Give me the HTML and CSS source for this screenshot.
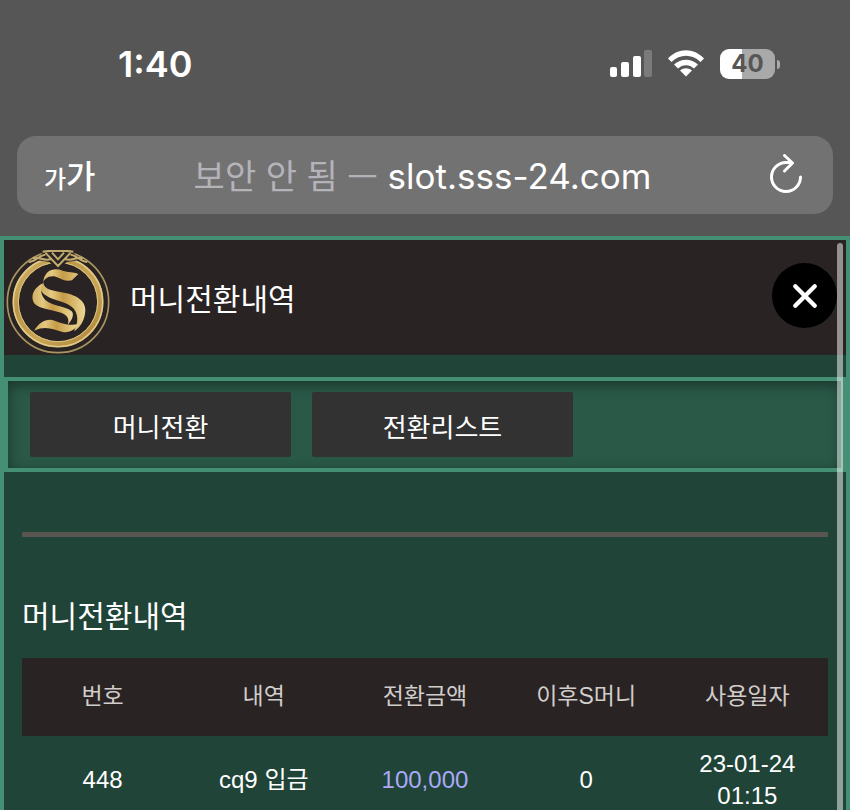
FILE: index.html
```html
<!DOCTYPE html>
<html lang="ko">
<head>
<meta charset="utf-8">
<meta name="viewport" content="width=device-width, initial-scale=1">
<title>머니전환내역</title>
<link rel="stylesheet" href="styles.css">
</head>
<body>
<div class="browser">
  <div class="status">
    <time class="clock">1:40</time>
    <div class="indicators">
      <svg class="signal" viewBox="0 0 42 28" aria-hidden="true">
        <rect x="0" y="17" width="7" height="10" rx="2"/>
        <rect x="11" y="12" width="8" height="15" rx="2"/>
        <rect x="23" y="6" width="8" height="21" rx="2"/>
        <rect class="faint" x="34" y="0" width="8" height="27" rx="2"/>
      </svg>
      <svg class="wifi" viewBox="0 0 36 28" aria-hidden="true">
        <path d="M0 8.500C10-2.500 26-2.500 36 8.500L32.500 12C24 3.500 12 3.500 3.500 12Z"/>
        <path d="M6 14.500C13 8 23 8 30 14.500L26 18.500C21.500 14 14.500 14 10 18.500Z"/>
        <path d="M12 20.500C15.500 17.500 20.500 17.500 24 20.500L18 26.500Z"/>
      </svg>
      <div class="battery"><span class="level">40</span><span class="nub"></span></div>
    </div>
  </div>
  <div class="address">
    <button class="textsize" type="button"><small>가</small>가</button>
    <button class="url" type="button"><span class="insecure">보안 안 됨 —</span> slot.sss-24.com</button>
    <button class="reload" type="button" aria-label="새로고침">
      <svg viewBox="0 0 34 40" aria-hidden="true"><path d="M23 8.500H17A14.500 14.500 0 1 0 31.500 23M15.500 1.500L23.500 9L15.500 17"/></svg>
    </button>
  </div>
</div>
<main class="app">
  <header class="top">
    <svg class="logo" viewBox="0 0 312 312" aria-hidden="true">
      <defs>
        <linearGradient id="ring" x1="0" y1="0" x2="1" y2="1">
          <stop offset="0" stop-color="#d6b970"/><stop offset=".3" stop-color="#bb9548"/>
          <stop offset=".6" stop-color="#c9a556"/><stop offset="1" stop-color="#ad8338"/>
        </linearGradient>
        <linearGradient id="gold" x1="0" y1="0" x2="1" y2="0">
          <stop offset="0" stop-color="#cfae61"/><stop offset=".25" stop-color="#e3c982"/>
          <stop offset=".5" stop-color="#c59b48"/><stop offset=".75" stop-color="#d9ba6c"/>
          <stop offset="1" stop-color="#ecd797"/>
        </linearGradient>
      </defs>
      <g fill="none">
        <circle cx="156" cy="156" r="152" stroke-width="5" stroke="#a8955f"/>
        <circle cx="156" cy="156" r="127" stroke-width="19" stroke="url(#ring)"/>
        <circle cx="156" cy="156" r="134" stroke-width="4" stroke="#e2cd8e"/>
        <circle cx="156" cy="156" r="119" stroke-width="3" stroke="#dcc480"/>
      </g>
      <path d="M112 6H200L222 30L182 36L156 60L130 36L90 30Z" fill="#2a2323"/>
      <g fill="none" stroke="#c0aa6e" stroke-width="6">
        <path d="M110 5C140 1 172 1 202 5M118 8L156 48L194 8M138 8L156 28L174 8M68 36C88 36 98 16 118 14M80 24C98 18 108 34 134 28M244 36C224 36 214 16 194 14M232 24C214 18 204 34 178 28"/>
      </g>
      <g transform="translate(-20 -46)" fill="url(#gold)">
        <path d="M237 118C222 110 206 114 190 108C164 97 137 107 132 138C130 160 149 166 178 171C221 177 257 192 258 224C258 251 246 277 224 290C238 262 237 239 222 221C202 200 163 199 139 182C122 170 120 158 130 147C133 132 150 121 169 126C187 132 199 142 218 137Z"/>
        <path d="M130 146C104 160 94 181 102 201C111 220 144 222 174 231C199 237 213 248 205 270C219 257 226 239 216 227C199 212 160 216 139 197C126 184 121 166 130 146Z"/>
        <path d="M104 288C121 262 143 250 166 258C187 266 204 273 237 269C228 284 211 296 190 292C164 286 142 271 104 288Z"/>
      </g>
      <path d="M112 134C124 159 169 156 194 171C205 178 208 186 203 190C188 168 150 173 123 150C115 144 113 140 112 134Z" fill="#2a2323"/>
    </svg>
    <h1 class="title">머니전환내역</h1>
    <button class="close" type="button" aria-label="닫기">
      <svg viewBox="0 0 24 24" aria-hidden="true"><path d="M3 3L21 21M21 3L3 21"/></svg>
    </button>
  </header>
  <nav class="tabs">
    <button class="tab" type="button">머니전환</button>
    <button class="tab" type="button">전환리스트</button>
  </nav>
  <section class="history">
    <hr class="rule">
    <h2 class="title">머니전환내역</h2>
    <table class="list">
      <thead>
        <tr><th>번호</th><th>내역</th><th>전환금액</th><th>이후S머니</th><th>사용일자</th></tr>
      </thead>
      <tbody>
        <tr><td>448</td><td>cq9 입금</td><td class="amount">100,000</td><td>0</td><td>23-01-24<br>01:15</td></tr>
      </tbody>
    </table>
  </section>
  <div class="scrollthumb"></div>
</main>
</body>
</html>
```
FILE: styles.css
```css
* { box-sizing: border-box; }

body {
  margin: 0;
  min-height: 100vh;
  display: flex;
  flex-direction: column;
  background: #565656;
  color: #fff;
  font-family: "Liberation Sans", "Noto Sans CJK KR", sans-serif;
}

button {
  margin: 0;
  padding: 0;
  border: 0;
  background: none;
  color: inherit;
  font: inherit;
}

svg { display: block; }

/* Browser chrome */
.browser {
  padding: 0 17px 22px;
  font-family: Inter, "Noto Sans CJK KR", sans-serif;
}

.status {
  display: flex;
  justify-content: space-between;
  align-items: center;
  height: 136px;
  padding: 0 53px 8px 101px;
}

.clock { font-size: 36px; font-weight: 600; }

.indicators { display: flex; align-items: center; gap: 16px; }
.signal { width: 42px; height: 28px; fill: #fff; }
.signal .faint { fill: #7b7b7b; }
.wifi { width: 36px; height: 28px; fill: #fff; }

.battery { display: flex; align-items: center; gap: 2px; }
.level {
  width: 55px;
  height: 30px;
  border-radius: 9px;
  background: linear-gradient(90deg, #fff 40%, #a9a9a9 40%);
  color: #565656;
  font-size: 24px;
  font-weight: 700;
  line-height: 30px;
  text-align: center;
}
.nub { width: 3px; height: 9px; border-radius: 0 4px 4px 0; background: #a9a9a9; }

.address {
  display: flex;
  justify-content: space-between;
  align-items: center;
  height: 78px;
  padding: 0 30px 2px 27px;
  border-radius: 19px;
  background: #727272;
}
.textsize { width: 84px; font-size: 32px; font-weight: 500; text-align: left; }
.textsize small { font-size: 24px; }
.url { font-size: 35px; white-space: nowrap; }
.insecure { color: #b4b3ba; font-family: "Noto Sans CJK KR", sans-serif; font-size: 34px; }
.reload { width: 86px; }
.reload svg {
  width: 34px;
  height: 40px;
  margin-left: auto;
  fill: none;
  stroke: #fff;
  stroke-width: 3;
  stroke-linecap: round;
  stroke-linejoin: round;
}

/* Site */
.app {
  position: relative;
  flex: 1;
  border: 4px solid #458f75;
  border-bottom: 0;
  background: #204438;
}

.top {
  display: flex;
  align-items: center;
  gap: 20px;
  height: 115px;
  padding: 4px 9px 0 2px;
  background: #2a2323;
}
.logo { width: 104px; height: 104px; margin-top: 4px; }

.title {
  margin: 0;
  font-size: 30px;
  font-weight: 400;
  line-height: 44px;
}

.close {
  display: grid;
  place-items: center;
  width: 65px;
  height: 65px;
  margin: 0 0 8px auto;
  border-radius: 50%;
  background: #000;
}
.close svg { width: 26px; height: 26px; stroke: #fff; stroke-width: 4; stroke-linecap: round; }

.tabs {
  display: flex;
  gap: 21px;
  margin-top: 22px;
  padding: 11px 22px;
  border: 4px solid #458f75;
  border-right-width: 5px;
  background: #2a5948;
  box-shadow: inset 0 4px 14px rgba(0, 0, 0, .4);
}
.tab {
  width: 261px;
  height: 65px;
  padding-top: 2px;
  border-radius: 2px;
  background: #323232;
  font-size: 26px;
}

.history { padding: 60px 18px 0; }
.rule {
  height: 5px;
  margin: 0 0 58px;
  border: 0;
  border-radius: 1px;
  background: #595551;
}

.list {
  width: 100%;
  margin-top: 19px;
  border-collapse: collapse;
  table-layout: fixed;
  text-align: center;
}
.list th {
  height: 78px;
  padding: 0 0 6px;
  background: #2a2323;
  color: #d0cdca;
  font-size: 23px;
  font-weight: 400;
}
.list td {
  height: 74px;
  padding: 12px 0 0;
  font-size: 24px;
  line-height: 32px;
}
.list .amount { color: #aaa9f7; }

.scrollthumb {
  position: absolute;
  top: 3px;
  right: 3px;
  bottom: 0;
  width: 6px;
  border-radius: 3px 3px 0 0;
  background: rgba(255, 255, 255, .5);
}
```
